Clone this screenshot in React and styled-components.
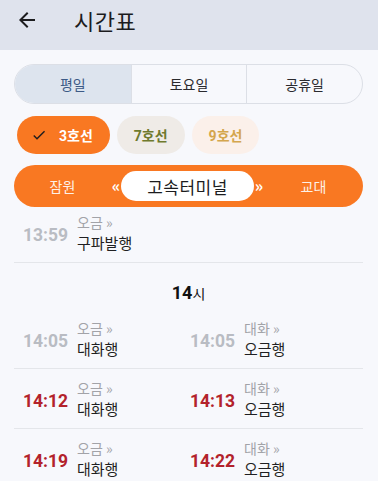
import React from "react";
import styled, { createGlobalStyle } from "styled-components";

const Global = createGlobalStyle`
  html, body { margin: 0; padding: 0; background: #f7f8fc; }
  body { font-family: "Roboto", "Noto Sans CJK KR", sans-serif; -webkit-font-smoothing: antialiased; }
  * { box-sizing: border-box; }
`;

const Page = styled.div`
  width: 378px;
  height: 481px;
  overflow: hidden;
  background: #f7f8fc;
`;

const Header = styled.div`
  height: 50px;
  background: #dfe3ed;
  display: flex;
  align-items: center;
  padding-left: 15px;
`;

const BackButton = styled.div`
  width: 24px;
  height: 24px;
  display: flex;
  align-items: center;
  justify-content: center;
  margin-top: -10px;
  color: #1c1c1e;
`;

const Title = styled.h1`
  margin: -10px 0 0 35px;
  font-family: "Noto Sans CJK KR", sans-serif;
  font-size: 22px;
  font-weight: 400;
  color: #1c1c1e;
  letter-spacing: 0.5px;
`;

const Content = styled.div`
  padding: 14px 15px 0 14px;
`;

const Segmented = styled.div`
  height: 40px;
  border: 1px solid #dcdfe6;
  border-radius: 20px;
  display: grid;
  grid-template-columns: 1fr 1fr 1fr;
  overflow: hidden;
`;

const Segment = styled.div`
  display: flex;
  align-items: center;
  justify-content: center;
  font-family: "Noto Sans CJK KR", sans-serif;
  font-size: 14px;
  color: ${(p) => (p.$active ? "#3c5a86" : "#2a2a2e")};
  background: ${(p) => (p.$active ? "#dde4ee" : "transparent")};
  border-left: ${(p) => (p.$first ? "none" : "1px solid #dcdfe6")};
`;

const ChipRow = styled.div`
  display: flex;
  gap: 7px;
  margin-top: 12px;
  padding-left: 3px;
`;

const Chip = styled.div`
  height: 38px;
  border-radius: 19px;
  display: flex;
  align-items: center;
  justify-content: center;
  gap: 12px;
  padding: ${(p) => (p.$check ? "0 17px 0 14px" : "0 17px")};
  background: ${(p) => p.$bg};
  color: ${(p) => p.$fg};
  font-family: "Roboto", "Noto Sans CJK KR", sans-serif;
  font-weight: 700;
  font-size: 14px;
`;

const StationBar = styled.div`
  margin-top: 11px;
  height: 42px;
  border-radius: 21px;
  background: #f97822;
  display: grid;
  grid-template-columns: 97px 10px 133px 10px 1fr;
  align-items: center;
  color: #fff;
  font-family: "Noto Sans CJK KR", sans-serif;
`;

const SideStation = styled.div`
  text-align: center;
  font-size: 14px;
  color: #fdf1e7;
`;

const Arrow = styled.div`
  font-size: 16px;
  font-weight: 700;
  text-align: center;
  color: #fff;
  line-height: 1;
  margin-top: -2px;
`;

const CurrentStation = styled.div`
  height: 30px;
  border-radius: 15px;
  background: #fff;
  color: #1c1c1e;
  font-size: 17px;
  display: flex;
  align-items: center;
  justify-content: center;
  letter-spacing: 0.5px;
`;

const Row = styled.div`
  display: grid;
  grid-template-columns: 167px 1fr;
  height: ${(p) => p.$h || 60}px;
  border-bottom: 1px solid #e4e6ea;
  align-items: center;
`;

const Cell = styled.div`
  display: flex;
  align-items: center;
  padding-left: 9px;
  margin-top: ${(p) => p.$mt || 0}px;
`;

const Time = styled.div`
  width: 54px;
  font-family: "Roboto", sans-serif;
  font-weight: 700;
  font-size: 17.5px;
  color: ${(p) => (p.$past ? "#b9bcc3" : "#b3222b")};
  margin-top: 4px;
`;

const Info = styled.div`
  display: flex;
  flex-direction: column;
  font-family: "Noto Sans CJK KR", sans-serif;
`;

const Dir = styled.div`
  font-size: 14px;
  color: #a2a3a8;
  line-height: 20px;
`;

const Dest = styled.div`
  font-size: 15px;
  color: #1f1f22;
  line-height: 22px;
`;

const HourHead = styled.div`
  height: 46px;
  display: flex;
  align-items: flex-end;
  justify-content: center;
  padding-bottom: 6px;
  color: #111;
`;

const HourNum = styled.span`
  font-family: "Roboto", sans-serif;
  font-weight: 700;
  font-size: 18px;
`;

const HourUnit = styled.span`
  font-family: "Noto Sans CJK KR", sans-serif;
  font-size: 14px;
`;

function Check() {
  return (
    <svg width="16" height="16" viewBox="0 0 24 24">
      <path d="M9 16.17L4.83 12l-1.42 1.41L9 19 21 7l-1.41-1.41z" fill="#1c1c1e" />
    </svg>
  );
}

function BackArrow() {
  return (
    <svg width="24" height="24" viewBox="0 0 24 24">
      <path d="M20 11H7.83l5.59-5.59L12 4l-8 8 8 8 1.41-1.41L7.83 13H20v-2z" fill="#1c1c1e" />
    </svg>
  );
}

function Entry({ time, past, dir, dest, mt }) {
  return (
    <Cell $mt={mt}>
      <Time $past={past}>{time}</Time>
      <Info>
        <Dir>{dir} »</Dir>
        <Dest>{dest}</Dest>
      </Info>
    </Cell>
  );
}

const rows = [
  [
    { time: "14:05", past: true, dir: "오금", dest: "대화행" },
    { time: "14:05", past: true, dir: "대화", dest: "오금행" },
  ],
  [
    { time: "14:12", dir: "오금", dest: "대화행" },
    { time: "14:13", dir: "대화", dest: "오금행" },
  ],
  [
    { time: "14:19", dir: "오금", dest: "대화행" },
    { time: "14:22", dir: "대화", dest: "오금행" },
  ],
];

export default function App() {
  return (
    <Page>
      <Global />
      <Header>
        <BackButton>
          <BackArrow />
        </BackButton>
        <Title>시간표</Title>
      </Header>
      <Content>
        <Segmented>
          <Segment $active $first>평일</Segment>
          <Segment>토요일</Segment>
          <Segment>공휴일</Segment>
        </Segmented>
        <ChipRow>
          <Chip $check $bg="#f97822" $fg="#fff">
            <Check />
            3호선
          </Chip>
          <Chip $bg="#efebe7" $fg="#6f7a2e">7호선</Chip>
          <Chip $bg="#fbf0ea" $fg="#d4a64e">9호선</Chip>
        </ChipRow>
        <StationBar>
          <SideStation>잠원</SideStation>
          <Arrow>«</Arrow>
          <CurrentStation>고속터미널</CurrentStation>
          <Arrow>»</Arrow>
          <SideStation>교대</SideStation>
        </StationBar>
        <Row $h={56}>
          <Entry time="13:59" past dir="오금" dest="구파발행" mt={-4} />
          <div />
        </Row>
        <HourHead>
          <HourNum>14</HourNum>
          <HourUnit>시</HourUnit>
        </HourHead>
        {rows.map((r, i) => (
          <Row key={i}>
            <Entry {...r[0]} />
            <Entry {...r[1]} />
          </Row>
        ))}
      </Content>
    </Page>
  );
}
